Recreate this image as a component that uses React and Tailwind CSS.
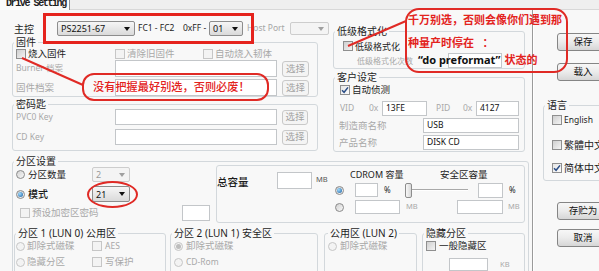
import React from 'react';

function Check({ on, off, className = '' }) {
  return (
    <span
      className={`flex h-[10px] w-[10px] shrink-0 items-center justify-center border ${
        off
          ? 'border-[#c6c6c6] bg-[#f3f3f3]'
          : on
          ? 'border-[#8f8f8f] bg-gradient-to-br from-[#e6e6e6] to-[#fbfbfb]'
          : 'border-[#8f8f8f] bg-gradient-to-br from-[#cfcfcf] to-[#f4f4f4]'
      } ${className}`}
    >
      {on && (
        <svg width="8" height="8" viewBox="0 0 8 8">
          <path d="M1 4.2 L3.1 6.3 L7 1.4" fill="none" stroke="#2a4d86" strokeWidth="1.5" />
        </svg>
      )}
    </span>
  );
}

function Radio({ on, off, className = '' }) {
  return (
    <span
      className={`flex h-[9px] w-[9px] shrink-0 items-center justify-center rounded-full border ${
        off ? 'border-[#c6c6c6] bg-[#f3f3f3]' : 'border-[#8a8a8a] bg-gradient-to-br from-[#d2d2d2] to-[#f8f8f8]'
      } ${className}`}
    >
      {on && (
        <span
          className={`h-[5px] w-[5px] rounded-full ${
            off ? 'bg-[#bdbdbd]' : 'bg-[radial-gradient(circle_at_35%_35%,#9fdcff,#1b5d9e)]'
          }`}
        />
      )}
    </span>
  );
}

function Combo({ value, w, h = 'h-[15px]', off }) {
  return (
    <div
      className={`flex ${w} ${h} shrink-0 items-center justify-between rounded-[2px] border pl-[3px] pr-[4px] ${
        off
          ? 'border-[#cdcdcd] bg-[#f4f4f4] text-[#9a9a9a]'
          : 'border-[#8d8d8d] bg-gradient-to-b from-[#f6f6f6] to-[#dadada] text-[#111]'
      }`}
    >
      <span className="text-[9px] leading-none">{value}</span>
      <svg width="6" height="4" viewBox="0 0 6 4">
        <path d="M0 0H6L3 4Z" fill={off ? '#a0a0a0' : '#111'} />
      </svg>
    </div>
  );
}

function Field({ w, h = 'h-[15px]', children, className = '' }) {
  return (
    <div
      className={`flex ${w} ${h} shrink-0 items-center border border-[#c3c6c9] bg-white pl-[3px] text-[8.5px] text-[#111] ${className}`}
    >
      {children}
    </div>
  );
}

function Btn({ children, off, className = '' }) {
  return (
    <div
      className={`flex shrink-0 items-center justify-center rounded-[3px] border text-[9.5px] ${
        off
          ? 'border-[#c9c9c9] bg-[#f4f4f4] text-[#a3a3a3]'
          : 'border-[#858585] bg-gradient-to-b from-[#f7f7f7] via-[#ebebeb] to-[#d6d6d6] text-[#111]'
      } ${className}`}
    >
      {children}
    </div>
  );
}

function Group({ label, className = '', legend = 'ml-[1px]', children }) {
  return (
    <fieldset className={`shrink-0 rounded-[3px] border border-[#d3d8dc] ${className}`}>
      <legend className={`${legend} px-[2px] text-[10px] leading-[10px] text-[#1d1d1d]`}>{label}</legend>
      {children}
    </fieldset>
  );
}

function Slider({ className = '' }) {
  return (
    <div className={`flex w-[63px] shrink-0 items-center ${className}`}>
      <span className="h-[15px] w-[7px] rounded-[2px] border border-[#8d8d8d] bg-gradient-to-r from-[#f8f8f8] to-[#d8d8d8]" />
      <span className="h-[2px] flex-1 border-t border-[#a9a9a9] bg-white" />
    </div>
  );
}

export default function App() {
  return (
    <div className="relative h-[271px] w-[599px] overflow-hidden bg-[#f8f8f8] font-['Noto_Sans','Noto_Sans_CJK_SC',sans-serif] text-[9.5px] leading-none text-[#1c1c1c]">
      {/* tab strip */}
      <div className="flex h-[10px]">
        <div className="w-[70px] overflow-hidden border-r border-[#8e9196] bg-[#fbfbfb]">
          <div className="-mt-[1px] pl-[6px] font-['Liberation_Mono',monospace] text-[10px] font-bold leading-[10px] tracking-[-1.4px] text-[#222]">
            Drive Setting
          </div>
        </div>
        <div className="flex-1 border-b border-[#d8d8d8] bg-[#efefef]" />
      </div>

      <div className="flex h-[261px]">
        {/* main settings */}
        <div className="w-[532px] shrink-0 pl-[12px]">
          <div className="flex h-[146px]">
            {/* left column */}
            <div className="flex w-[321px] shrink-0 flex-col">
              <div className="mt-[11px] flex h-[15px] items-center whitespace-nowrap">
                <span className="ml-[2px] w-[43px] pt-[1px] text-[10px]">主控</span>
                <Combo value="PS2251-67" w="w-[78px]" />
                <span className="ml-[3px] w-[45px] text-[8.5px]">FC1 - FC2</span>
                <span className="w-[26px] text-[8.5px]">0xFF -</span>
                <Combo value="01" w="w-[34px]" />
                <span className="ml-[4px] w-[43px] text-[8.5px] text-[#a6a6a6]">Host Port</span>
                <Combo value="" w="w-[39px]" h="h-[13px]" off />
              </div>

              <Group label="固件" className="mt-[1px] h-[60px] w-[306px]">
                <div className="mt-[1px] flex h-[11px] items-center whitespace-nowrap">
                  <div className="flex w-[102px] items-center pl-[3px]">
                    <Check />
                    <span className="ml-[2px]">烧入固件</span>
                  </div>
                  <div className="flex w-[88px] items-center text-[#a8a8a8]">
                    <Check off />
                    <span className="ml-[2px]">清除旧固件</span>
                  </div>
                  <div className="flex items-center text-[#a8a8a8]">
                    <Check off />
                    <span className="ml-[2px]">自动烧入韧体</span>
                  </div>
                </div>
                <div className="mt-[1px] flex h-[17px] items-center">
                  <span className="w-[102px] pl-[3px] text-[8.5px] text-[#a8a8a8]">Burner 档案</span>
                  <Field w="w-[162px]" h="h-[17px]" />
                  <Btn off className="ml-[5px] h-[16px] w-[27px]">选择</Btn>
                </div>
                <div className="mt-[2px] flex h-[17px] items-center">
                  <span className="w-[102px] pl-[3px] text-[#a8a8a8]">固件档案</span>
                  <Field w="w-[162px]" h="h-[17px]" />
                  <Btn off className="ml-[5px] h-[16px] w-[27px]">选择</Btn>
                </div>
              </Group>

              <Group label="密码匙" className="mt-[2px] h-[52px] w-[306px]">
                <div className="flex h-[16px] items-center">
                  <span className="w-[102px] pl-[3px] text-[8.5px] text-[#a8a8a8]">PVC0 Key</span>
                  <Field w="w-[162px]" h="h-[16px]" />
                  <Btn off className="ml-[5px] h-[15px] w-[26px]">选择</Btn>
                </div>
                <div className="mt-[4px] flex h-[16px] items-center">
                  <span className="w-[102px] pl-[3px] text-[8.5px] text-[#a8a8a8]">CD Key</span>
                  <Field w="w-[162px]" h="h-[16px]" />
                  <Btn off className="ml-[5px] h-[15px] w-[26px]">选择</Btn>
                </div>
              </Group>
            </div>

            {/* right column */}
            <div className="flex w-[192px] shrink-0 flex-col">
              <Group label="低级格式化" className="mt-[16px] h-[43px] w-[192px]">
                <div className="mt-[5px] flex h-[10px] items-center pl-[9px]">
                  <Check />
                  <span className="ml-[2px] text-[9px]">低级格式化</span>
                </div>
                <div className="mt-[2px] flex h-[15px] items-center">
                  <span className="w-[114px] whitespace-nowrap pl-[23px] text-[8px] text-[#a8a8a8]">低级格式化次数</span>
                  <Field w="w-[54px]" h="h-[15px]" />
                </div>
              </Group>

              <Group label="客户设定" className="mt-[3px] h-[80px] w-[192px]">
                <div className="mt-[3px] flex h-[10px] items-center pl-[6px]">
                  <Check on />
                  <span className="ml-[2px]">自动侦测</span>
                </div>
                <div className="mt-[6px] flex h-[15px] items-center text-[8.5px]">
                  <span className="w-[35px] pl-[6px] text-[#a8a8a8]">VID</span>
                  <span className="w-[13px] text-[#a8a8a8]">0x</span>
                  <Field w="w-[45px]">13FE</Field>
                  <span className="ml-[9px] w-[27px] text-[#a8a8a8]">PID</span>
                  <span className="w-[13px] text-[#a8a8a8]">0x</span>
                  <Field w="w-[43px]">4127</Field>
                </div>
                <div className="mt-[2px] flex h-[15px] items-center">
                  <span className="w-[89px] pl-[5px] text-[#a8a8a8]">制造商名称</span>
                  <Field w="w-[96px]">USB</Field>
                </div>
                <div className="mt-[2px] flex h-[15px] items-center">
                  <span className="w-[89px] pl-[5px] text-[#a8a8a8]">产品名称</span>
                  <Field w="w-[96px]">DISK CD</Field>
                </div>
              </Group>
            </div>
          </div>

          {/* partition settings */}
          <Group label="分区设置" className="h-[120px] w-[517px]">
            <div className="flex h-[57px]">
              <div className="flex w-[203px] shrink-0 flex-col">
                <div className="mt-[1px] flex h-[15px] items-center">
                  <div className="flex w-[79px] items-center pl-[3px]">
                    <Radio />
                    <span className="ml-[3px]">分区数量</span>
                  </div>
                  <Combo value="2" w="w-[38px]" off />
                </div>
                <div className="mt-[4px] flex h-[16px] items-center">
                  <div className="flex w-[79px] items-center pl-[3px]">
                    <Radio on />
                    <span className="ml-[3px] text-[10px] font-medium">模式</span>
                  </div>
                  <Combo value="21" w="w-[38px]" h="h-[16px]" />
                </div>
                <div className="mt-[3px] flex h-[16px] items-center">
                  <div className="flex w-[169px] items-center pl-[7px] text-[#a8a8a8]">
                    <Check off />
                    <span className="ml-[2px]">预设加密区密码</span>
                  </div>
                  <Field w="w-[28px]" h="h-[16px]" />
                </div>
              </div>

              <div className="-mt-[1px] flex h-[58px] w-[309px] shrink-0 rounded-[3px] border border-[#d3d8dc]">
                <div className="flex w-[116px] shrink-0 items-start">
                  <span className="mt-[11px] w-[60px] text-[10.5px] font-medium">总容量</span>
                  <Field w="w-[35px]" h="h-[17px]" className="mt-[6px]" />
                  <span className="ml-[4px] mt-[10px] text-[7.5px] text-[#555]">MB</span>
                </div>
                <div className="flex flex-1 flex-col">
                  <div className="mt-[3px] flex h-[11px] items-center whitespace-nowrap">
                    <span className="ml-[17px] w-[90px] text-[9px]">CDROM 容量</span>
                    <span>安全区容量</span>
                  </div>
                  <div className="mt-[2px] flex h-[16px] items-center">
                    <Radio on className="ml-[2px]" />
                    <Field w="w-[23px]" h="h-[14px]" className="ml-[11px]" />
                    <span className="ml-[6px] w-[7px] text-[8px]">%</span>
                    <Slider className="ml-[14px]" />
                    <Field w="w-[25px]" h="h-[15px]" className="ml-[10px]" />
                    <span className="ml-[6px] text-[8px]">%</span>
                  </div>
                  <div className="mt-[2px] flex h-[14px] items-center">
                    <Radio className="ml-[2px]" />
                    <Field w="w-[45px]" h="h-[14px]" className="ml-[11px]" />
                    <span className="ml-[6px] w-[10px] text-[7.5px] text-[#a8a8a8]">MB</span>
                    <Field w="w-[46px]" h="h-[14px]" className="ml-[41px]" />
                    <span className="ml-[5px] text-[7.5px] text-[#a8a8a8]">MB</span>
                  </div>
                </div>
              </div>
            </div>

            <div className="mt-[5px] flex pl-[1px]">
              <Group label="分区 1 (LUN 0) 公用区" className="h-[50px] w-[152px]">
                <div className="mt-[3px] flex h-[10px] items-center text-[#a8a8a8]">
                  <div className="flex w-[77px] items-center pl-[1px]">
                    <Radio off />
                    <span className="ml-[2px]">卸除式磁碟</span>
                  </div>
                  <Check off />
                  <span className="ml-[3px] text-[8.5px]">AES</span>
                </div>
                <div className="mt-[6px] flex h-[10px] items-center text-[#a8a8a8]">
                  <div className="flex w-[77px] items-center pl-[1px]">
                    <Radio off />
                    <span className="ml-[2px]">隐藏分区</span>
                  </div>
                  <Check off />
                  <span className="ml-[3px]">写保护</span>
                </div>
              </Group>
              <Group label="分区 2 (LUN 1) 安全区" className="ml-[4px] h-[50px] w-[148px]">
                <div className="mt-[3px] flex h-[10px] items-center pl-[3px] text-[#a8a8a8]">
                  <Radio on off />
                  <span className="ml-[3px]">卸除式磁碟</span>
                </div>
                <div className="mt-[6px] flex h-[10px] items-center pl-[3px] text-[#a8a8a8]">
                  <Radio off />
                  <span className="ml-[3px] text-[8.5px]">CD-Rom</span>
                </div>
              </Group>
              <Group label="公用区 (LUN 2)" legend="ml-[3px]" className="ml-[6px] h-[50px] w-[93px]">
                <div className="mt-[3px] flex h-[10px] items-center pl-[3px] text-[#a8a8a8]">
                  <Radio off />
                  <span className="ml-[3px]">卸除式磁碟</span>
                </div>
              </Group>
              <Group label="隐藏分区" className="ml-[5px] h-[50px] w-[103px]">
                <div className="mt-[3px] flex h-[10px] items-center pl-[3px]">
                  <Check />
                  <span className="ml-[3px]">一般隐藏区</span>
                </div>
                <div className="mt-[7px] flex h-[13px] items-center">
                  <Field w="w-[39px]" h="h-[13px]" className="ml-[26px]" />
                  <span className="ml-[12px] text-[7.5px] text-[#a8a8a8]">KB</span>
                </div>
              </Group>
            </div>
          </Group>
        </div>

        {/* separator */}
        <div className="w-[2px] shrink-0 border-l border-[#9a9a9a] bg-white" />

        {/* right panel */}
        <div className="flex flex-1 flex-col">
          <Btn className="ml-[23px] mt-[23px] h-[18px] w-[52px]">保存</Btn>
          <Btn className="ml-[23px] mt-[12px] h-[18px] w-[52px]">载入</Btn>
          <Group label="语言" className="ml-[9px] mt-[19px] h-[81px] w-[70px]">
            <div className="mt-[5px] flex h-[10px] items-center pl-[8px]">
              <Check />
              <span className="ml-[2px] text-[8.5px]">English</span>
            </div>
            <div className="mt-[15px] flex h-[10px] items-center whitespace-nowrap pl-[8px]">
              <Check />
              <span className="ml-[2px] text-[10px]">繁體中文</span>
            </div>
            <div className="mt-[13px] flex h-[10px] items-center whitespace-nowrap pl-[8px]">
              <Check on />
              <span className="ml-[2px] text-[10px]">简体中文</span>
            </div>
          </Group>
          <Btn className="ml-[23px] mt-[21px] h-[18px] w-[52px]">存贮为</Btn>
          <Btn className="ml-[23px] mt-[9px] h-[18px] w-[52px]">取消</Btn>
        </div>
      </div>

      {/* red annotations drawn over the screenshot */}
      <div className="absolute left-[43px] top-[13px] h-[31px] w-[211px] border-[3px] border-[#e5231d]" />
      <div className="absolute left-[87px] top-[181px] h-[27px] w-[51px] rounded-[50%] border-2 border-[#e02a25]" />
      <div className="absolute left-[82px] top-[73px] flex h-[28px] w-[187px] items-center whitespace-nowrap rounded-[12px] border-2 border-[#e02a25] pl-[9px] text-[11.2px] font-medium text-[#e3231d]">
        没有把握最好别选，否则必废！
      </div>
      <div className="absolute left-[405px] top-[8px] h-[65px] w-[163px] whitespace-nowrap rounded-[14px] border-2 border-[#e02a25] pl-[1px] text-[11px] font-bold leading-[12px] text-[#e3231d]">
        <div className="mt-[4px]">千万别选，否则会像你们遇到那</div>
        <div className="mt-[11px]">种量产时停在&nbsp;&nbsp;&nbsp;：</div>
        <div className="mt-[5px] pl-[10px]">
          <span className="text-[#111]">“do preformat”</span>
          <span className="ml-[4px]">状态的</span>
        </div>
      </div>
      <svg className="pointer-events-none absolute left-0 top-0" width="599" height="271">
        <line x1="22" y1="58" x2="83" y2="85" stroke="#e02a25" strokeWidth="2" />
        <line x1="406" y1="21" x2="348" y2="46" stroke="#e02a25" strokeWidth="2" />
      </svg>
    </div>
  );
}
